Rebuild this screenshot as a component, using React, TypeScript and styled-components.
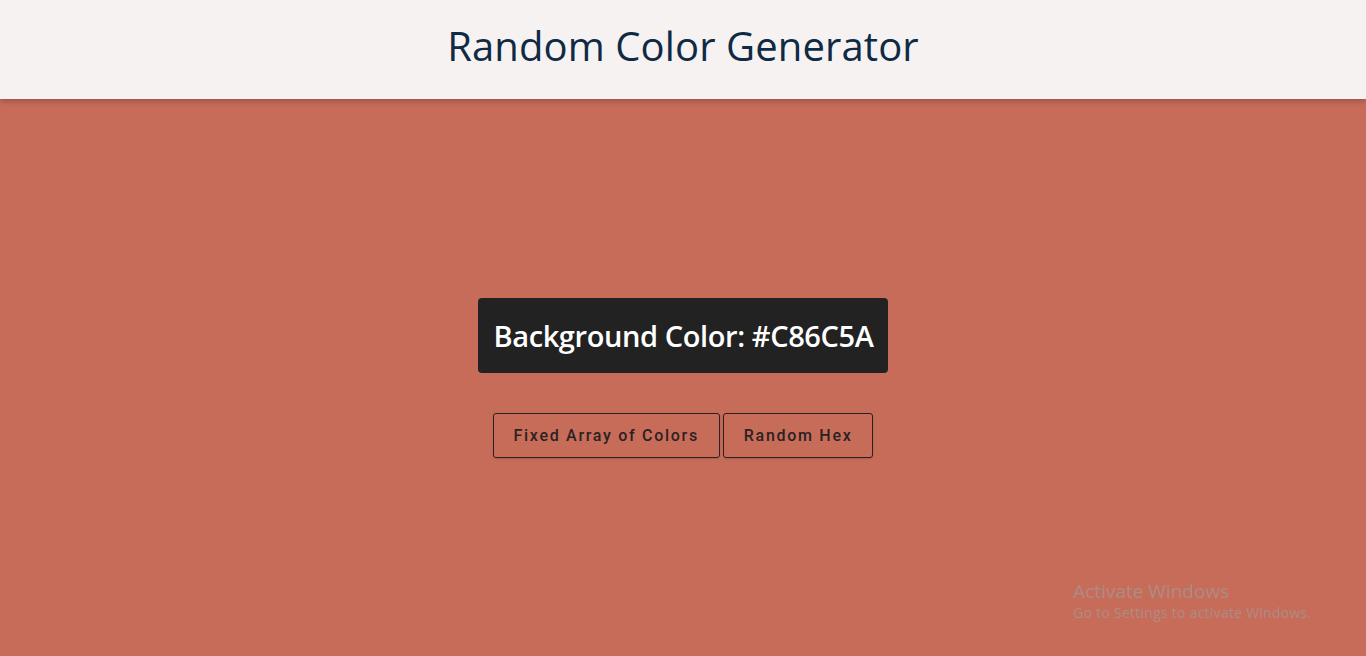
import React from "react";
import styled, { createGlobalStyle } from "styled-components";

const Global = createGlobalStyle`
  html, body { margin: 0; padding: 0; height: 100%; }
  body { background: #c86c5a; font-family: "Open Sans", sans-serif; }
  #root { min-height: 100vh; }
`;

const Page = styled.div`
  display: flex;
  flex-direction: column;
  min-height: 100vh;
  background: #c86c5a;
`;

const Header = styled.header`
  height: 99px;
  box-sizing: border-box;
  padding-bottom: 8px;
  flex: 0 0 auto;
  display: flex;
  align-items: center;
  justify-content: center;
  background: #f6f2f1;
  box-shadow: 0 2px 6px rgba(0, 0, 0, 0.25);
  position: relative;
  z-index: 1;
`;

const Title = styled.h1`
  margin: 0;
  font-family: "Open Sans", sans-serif;
  font-weight: 400;
  font-size: 40px;
  color: #0f2a44;
  letter-spacing: 0.1px;
`;

const Main = styled.main`
  flex: 1;
  display: flex;
  flex-direction: column;
  align-items: center;
  justify-content: center;
  gap: 40px;
`;

const ColorBox = styled.div`
  background: #222222;
  border-radius: 4px;
  height: 75px;
  padding: 0 15px 0 16px;
  display: flex;
  align-items: center;
  color: #ffffff;
  font-family: "Open Sans", sans-serif;
  font-weight: 600;
  font-size: 29px;
  letter-spacing: -0.4px;
`;

const Buttons = styled.div`
  display: flex;
  gap: 3px;
`;

const Button = styled.button`
  height: 45px;
  padding: 0 20px;
  background: transparent;
  border: 1px solid #2a2222;
  border-radius: 3px;
  font-family: Roboto, sans-serif;
  font-weight: 500;
  font-size: 16px;
  letter-spacing: 1.7px;
  color: #2a2222;
  cursor: pointer;
  box-shadow: 0 1px 2px rgba(0, 0, 0, 0.15);
`;

const Watermark = styled.div`
  position: fixed;
  left: 1073px;
  top: 579px;
  font-family: "Open Sans", sans-serif;
  pointer-events: none;
  color: #ab8d87;
`;

const WmTitle = styled.div`
  font-size: 19px;
  line-height: 24px;
`;

const WmSub = styled.div`
  font-size: 14px;
  line-height: 20px;
  letter-spacing: 0.25px;
`;

export default function App() {
  return (
    <Page>
      <Global />
      <Header>
        <Title>Random Color Generator</Title>
      </Header>
      <Main>
        <ColorBox>Background Color: #C86C5A</ColorBox>
        <Buttons>
          <Button>Fixed Array of Colors</Button>
          <Button>Random Hex</Button>
        </Buttons>
      </Main>
      <Watermark>
        <WmTitle>Activate Windows</WmTitle>
        <WmSub>Go to Settings to activate Windows.</WmSub>
      </Watermark>
    </Page>
  );
}
